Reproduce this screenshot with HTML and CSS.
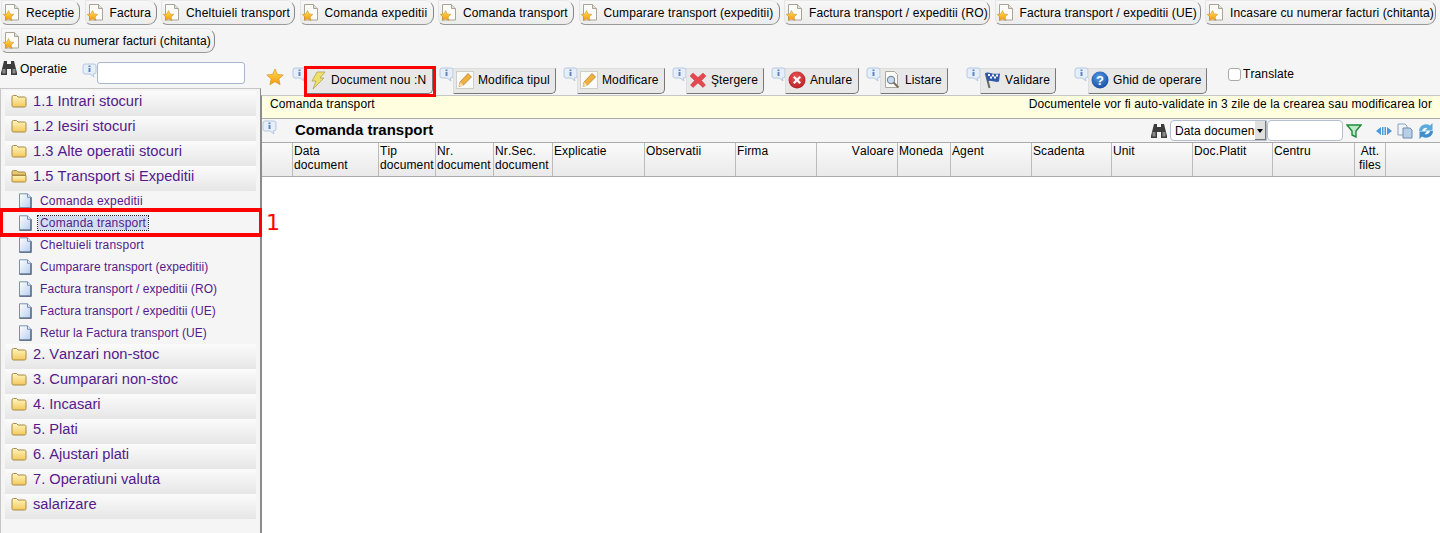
FILE: index.html
```html
<!DOCTYPE html>
<html lang="ro">
<head>
<meta charset="utf-8">
<title>Comanda transport</title>
<link rel="stylesheet" href="styles.css">
</head>
<body>
<svg class="defs" width="0" height="0" aria-hidden="true">
  <defs>
    <linearGradient id="fold" x1="0" y1="0" x2="0" y2="1"><stop offset="0" stop-color="#fff6c0"/><stop offset="1" stop-color="#f2c95c"/></linearGradient>
    <linearGradient id="page" x1="0" y1="0" x2="1" y2="1"><stop offset="0" stop-color="#ffffff"/><stop offset="1" stop-color="#b4cdf0"/></linearGradient>
    <radialGradient id="redg" cx=".45" cy=".35" r=".7"><stop offset="0" stop-color="#ee5a5a"/><stop offset="1" stop-color="#b01c22"/></radialGradient>
    <radialGradient id="blueg" cx=".45" cy=".35" r=".7"><stop offset="0" stop-color="#5a9be8"/><stop offset="1" stop-color="#12489e"/></radialGradient>
    <linearGradient id="stg" x1="0" y1="0" x2="0" y2="1"><stop offset="0" stop-color="#ffdf50"/><stop offset="1" stop-color="#f59a10"/></linearGradient>
    <symbol id="i-tab" viewBox="0 0 18 18">
      <path d="M2.500.5h9l4 4V16h-13z" fill="#fbfbf8" stroke="#a8a498"/>
      <path d="M11.500.5v4h4" fill="#e2e0d6" stroke="#a8a498"/>
      <path d="M5.500 6.500l1.600 3.400 3.700.5-2.700 2.500.7 3.600-3.300-1.800-3.300 1.800.7-3.600L.2 10.400l3.700-.5z" fill="url(#stg)" stroke="#c48a20" stroke-width=".5"/>
    </symbol>
    <symbol id="i-info" viewBox="0 0 15 15">
      <path d="M3 1h9a2 2 0 0 1 2 2v6a2 2 0 0 1-2 2h-1l1 3-4-3H3a2 2 0 0 1-2-2V3a2 2 0 0 1 2-2z" fill="#e6eef9" stroke="#b6c8e0"/>
      <rect x="6.500" y="2.500" width="2" height="1.600" fill="#5f86bd"/>
      <rect x="6.500" y="5" width="2" height="4" fill="#5f86bd"/>
    </symbol>
    <symbol id="i-folder" viewBox="0 0 16 14">
      <path d="M1 3a1.500 1.500 0 0 1 1.500-1.500h3L7 3h6.500A1.500 1.500 0 0 1 15 4.500v7a1.500 1.500 0 0 1-1.500 1.500h-11A1.500 1.500 0 0 1 1 11.500z" fill="url(#fold)" stroke="#a98a45"/>
    </symbol>
    <symbol id="i-open" viewBox="0 0 16 14">
      <path d="M1 3a1.500 1.500 0 0 1 1.500-1.500h3L7 3h6A1.500 1.500 0 0 1 14.500 4.500V6H1z" fill="#e8c870" stroke="#a98a45"/>
      <path d="M1 12.500V6.500h14v5A1.500 1.500 0 0 1 13.500 13h-11z" fill="url(#fold)" stroke="#a98a45"/>
    </symbol>
    <symbol id="i-page" viewBox="0 0 14 16">
      <path d="M1.500.8h8l3.500 3.500v10.900h-11.500z" fill="url(#page)" stroke="#7a8fb2"/>
      <path d="M13 4.300v10.900H1.500" fill="none" stroke="#55647c" stroke-width="1.300"/>
      <path d="M9.500.8v3.500h3.500" fill="#dfe9f8" stroke="#7a8fb2"/>
    </symbol>
    <symbol id="i-bino" viewBox="0 0 16 16">
      <path d="M3 1h3v3h4V1h3l1 4 2 8v2H10V9H6v6H0v-2l2-8z" fill="#3c3c3c"/>
      <rect x="1.500" y="9" width="3" height="4.500" fill="#8a8a8a"/>
      <rect x="11.500" y="9" width="3" height="4.500" fill="#8a8a8a"/>
    </symbol>
    <symbol id="i-pencil" viewBox="0 0 18 18">
      <rect x=".5" y=".5" width="17" height="17" fill="#fbfbf8" stroke="#cfcfc8"/>
      <path d="M3 15.500l1-4.500 8-8.500 3.500 3.500-8 8z" fill="#f0b040" stroke="#a87a30" stroke-width=".7"/>
      <path d="M3 15.500l1-4.500 3.500 3.500z" fill="#f5e1b0"/>
    </symbol>
  </defs>
</svg>

<nav class="tabs">
  <a class="tab tab-receptie"><svg class="ico18"><use href="#i-tab"/></svg>Receptie</a>
  <a class="tab tab-factura"><svg class="ico18"><use href="#i-tab"/></svg>Factura</a>
  <a class="tab tab-chelt wide"><svg class="ico18"><use href="#i-tab"/></svg>Cheltuieli transport</a>
  <a class="tab tab-exp wide"><svg class="ico18"><use href="#i-tab"/></svg>Comanda expeditii</a>
  <a class="tab tab-trans"><svg class="ico18"><use href="#i-tab"/></svg>Comanda transport</a>
  <a class="tab tab-cump"><svg class="ico18"><use href="#i-tab"/></svg>Cumparare transport (expeditii)</a>
  <a class="tab tab-ro"><svg class="ico18"><use href="#i-tab"/></svg>Factura transport / expeditii (RO)</a>
  <a class="tab tab-ue"><svg class="ico18"><use href="#i-tab"/></svg>Factura transport / expeditii (UE)</a>
  <a class="tab tab-inc"><svg class="ico18"><use href="#i-tab"/></svg>Incasare cu numerar facturi (chitanta)</a>
  <a class="tab tab-plata"><svg class="ico18"><use href="#i-tab"/></svg>Plata cu numerar facturi (chitanta)</a>
</nav>

<div class="main">
  <aside class="side">
    <div class="search">
      <svg class="ico-bino"><use href="#i-bino"/></svg>
      <span class="search-label">Operatie</span>
      <svg class="ico-info search-info"><use href="#i-info"/></svg>
      <input class="search-input" type="text">
    </div>
    <div class="tree">
      <div class="group"><svg class="ico-folder"><use href="#i-folder"/></svg>1.1 Intrari stocuri</div>
      <div class="group"><svg class="ico-folder"><use href="#i-folder"/></svg>1.2 Iesiri stocuri</div>
      <div class="group"><svg class="ico-folder"><use href="#i-folder"/></svg>1.3 Alte operatii stocuri</div>
      <div class="group"><svg class="ico-folder"><use href="#i-open"/></svg>1.5 Transport si Expeditii</div>
      <div class="leaf leaf-wide"><svg class="ico-page"><use href="#i-page"/></svg><span>Comanda expeditii</span></div>
      <div class="leaf leaf-on leaf-wide"><svg class="ico-page"><use href="#i-page"/></svg><span>Comanda transport</span></div>
      <div class="leaf leaf-wide"><svg class="ico-page"><use href="#i-page"/></svg><span>Cheltuieli transport</span></div>
      <div class="leaf"><svg class="ico-page"><use href="#i-page"/></svg><span>Cumparare transport (expeditii)</span></div>
      <div class="leaf"><svg class="ico-page"><use href="#i-page"/></svg><span>Factura transport / expeditii (RO)</span></div>
      <div class="leaf"><svg class="ico-page"><use href="#i-page"/></svg><span>Factura transport / expeditii (UE)</span></div>
      <div class="leaf leaf-last"><svg class="ico-page"><use href="#i-page"/></svg><span>Retur la Factura transport (UE)</span></div>
      <div class="group"><svg class="ico-folder"><use href="#i-folder"/></svg>2. Vanzari non-stoc</div>
      <div class="group"><svg class="ico-folder"><use href="#i-folder"/></svg>3. Cumparari non-stoc</div>
      <div class="group"><svg class="ico-folder"><use href="#i-folder"/></svg>4. Incasari</div>
      <div class="group"><svg class="ico-folder"><use href="#i-folder"/></svg>5. Plati</div>
      <div class="group"><svg class="ico-folder"><use href="#i-folder"/></svg>6. Ajustari plati</div>
      <div class="group"><svg class="ico-folder"><use href="#i-folder"/></svg>7. Operatiuni valuta</div>
      <div class="group"><svg class="ico-folder"><use href="#i-folder"/></svg>salarizare</div>
    </div>
  </aside>

  <section class="content">
    <div class="toolbar">
      <svg class="ico-star" viewBox="0 0 18 18"><path d="M9 1l2.400 5.400 5.800.6-4.400 3.900 1.300 5.800L9 13.700l-5.100 3 1.300-5.800L.8 7l5.800-.6z" fill="url(#stg)" stroke="#d89020" stroke-width=".7"/></svg>
      <svg class="ico-info tb-i1"><use href="#i-info"/></svg>
      <button class="btn btn-new"><svg class="ico18" viewBox="0 0 18 18"><path d="M8 1h8l-5 6h4L4 18l3-8H3z" fill="#efe06a" stroke="#a89a50" stroke-width=".7"/></svg>Document nou :N</button>
      <svg class="ico-info tb-i2"><use href="#i-info"/></svg>
      <button class="btn btn-tip"><svg class="ico18"><use href="#i-pencil"/></svg>Modifica tipul</button>
      <svg class="ico-info tb-i3"><use href="#i-info"/></svg>
      <button class="btn btn-mod"><svg class="ico18"><use href="#i-pencil"/></svg>Modificare</button>
      <svg class="ico-info tb-i3"><use href="#i-info"/></svg>
      <button class="btn btn-del"><svg class="ico18" viewBox="0 0 18 18"><path d="M4 2l5 4.500L14 2l3 3-4.500 4.500L16.500 14 14 16.500 9 12l-5 4.500L1.500 14l4-4.500L1 5z" fill="#e4484e" stroke="#c84048" stroke-width=".5"/></svg>Ştergere</button>
      <svg class="ico-info tb-i3"><use href="#i-info"/></svg>
      <button class="btn btn-anu"><svg class="ico18" viewBox="0 0 18 18"><circle cx="9" cy="9" r="8.500" fill="url(#redg)"/><path d="M5 6.500L6.500 5 9 7.500 11.500 5 13 6.500 10.500 9l2.500 2.500-1.500 1.500L9 10.500 6.500 13 5 11.500 7.500 9z" fill="#fff"/></svg>Anulare</button>
      <svg class="ico-info tb-i3"><use href="#i-info"/></svg>
      <button class="btn btn-lis"><svg class="ico18" viewBox="0 0 18 18"><path d="M2.500.5h9l3 3v13h-12z" fill="#fbfbf8" stroke="#a8a8a0"/><circle cx="8" cy="9" r="3.600" fill="#c8dcf0" stroke="#7d8a98" stroke-width="1.200"/><path d="M10.500 11.500l5 5" stroke="#7d7058" stroke-width="2"/></svg>Listare</button>
      <svg class="ico-info tb-i4"><use href="#i-info"/></svg>
      <button class="btn btn-val"><svg class="ico18" viewBox="0 0 18 18"><path d="M3 3l3.500 14" stroke="#6a6a62" stroke-width="2"/><path d="M2 2c4-2 7 2 15 .5l-1 8c-5 1.500-8-2-11.500 0z" fill="#3058a8"/><path d="M5 3h2v2H5zm4 .5h2v2H9zm4 0h2v2h-2zM7 5.500h2v2H7zm4 0h2v2h-2z" fill="#fff"/></svg>Validare</button>
      <svg class="ico-info tb-i4"><use href="#i-info"/></svg>
      <button class="btn btn-ghid"><svg class="ico18" viewBox="0 0 18 18"><circle cx="9" cy="9" r="8.500" fill="url(#blueg)"/><text x="9" y="13.500" class="qmark">?</text></svg>Ghid de operare</button>
      <label class="translate"><input type="checkbox" class="chk">Translate</label>
    </div>

    <div class="panel">
      <div class="notice">
        <span>Comanda transport</span>
        <span>Documentele vor fi auto-validate in 3 zile de la crearea sau modificarea lor</span>
      </div>
      <div class="titlebar">
        <svg class="ico-info title-info"><use href="#i-info"/></svg>
        <h1 class="title">Comanda transport</h1>
        <div class="filter">
          <svg class="ico-bino"><use href="#i-bino"/></svg>
          <span class="select"><span class="select-text">Data documen</span><span class="select-arrow"></span></span>
          <input class="filter-input" type="text">
          <svg class="ico-funnel" viewBox="0 0 16 14"><path d="M1 1h14L10 7v6l-4-2V7z" fill="#bfe8c8" stroke="#1f8a3c" stroke-width="1.400"/></svg>
          <svg class="ico-arrows" viewBox="0 0 16 12"><path d="M0 6l5-4v8zM16 6l-5-4v8z" fill="#4d9ad8"/><rect x="6" y="2" width="1.500" height="8" fill="#4d9ad8"/><rect x="8.500" y="2" width="1.500" height="8" fill="#4d9ad8"/></svg>
          <svg class="ico-copy" viewBox="0 0 16 16"><path d="M1 1h7l2 2v9H1z" fill="#f0f4fa" stroke="#8aa0bc"/><path d="M6 5h7l2 2v8H6z" fill="#b8cfe8" stroke="#6e8cae"/></svg>
          <svg class="ico-refresh" viewBox="0 0 16 16"><path d="M1 8a7 7 0 0 1 11-5.500L14.500 0v7.500H7L9.500 5A4 4 0 0 0 4 8z" fill="#5aaade"/><path d="M15 8a7 7 0 0 1-11 5.500L1.500 16V8.500H9L6.500 11A4 4 0 0 0 12 8z" fill="#3f8fce"/></svg>
        </div>
      </div>
      <div class="grid-head">
        <div class="th w30"></div>
        <div class="th w86">Data<br>document</div>
        <div class="th w57">Tip<br>document</div>
        <div class="th w58">Nr.<br>document</div>
        <div class="th w59">Nr.Sec.<br>document</div>
        <div class="th w92">Explicatie</div>
        <div class="th w91">Observatii</div>
        <div class="th w81">Firma</div>
        <div class="th w81 right">Valoare</div>
        <div class="th w53">Moneda</div>
        <div class="th w81">Agent</div>
        <div class="th w80">Scadenta</div>
        <div class="th w81">Unit</div>
        <div class="th w80">Doc.Platit</div>
        <div class="th w82">Centru</div>
        <div class="th w31 center">Att.<br>files</div>
        <div class="th rest"></div>
      </div>
      <div class="grid-body"></div>
    </div>
  </section>
</div>

<div class="mark mark-new"></div>
<div class="mark mark-leaf"></div>
<div class="mark-num">1</div>
</body>
</html>
```

FILE: styles.css
```css
* { box-sizing: border-box; }
html, body { margin: 0; height: 533px; overflow: hidden; }
body {
  background: #f5f5f5;
  color: #000;
  font: 12px/14px "Liberation Sans", Arial, sans-serif;
  font-kerning: none;
  letter-spacing: .12px;
  position: relative;
}
.defs { position: absolute; }
svg { display: block; flex: none; }
.wide { letter-spacing: .2px; }

/* tabs */
.tabs { display: flex; flex-wrap: wrap; padding: 0 0 0 1px; height: 56px; align-content: flex-start; row-gap: 3px; }
.tab {
  display: flex; align-items: center; height: 25px; padding: 0 3px 0 1px; margin-right: 4.500px;
  background: linear-gradient(#f7f7f7, #ececec);
  border: 1px solid #c4c4c4; border-left-color: #e4e4e4; border-top-color: #e8e8e8;
  border-right-color: #888; border-bottom-color: #999;
  border-radius: 0 9px 9px 6px;
  white-space: nowrap;
}
.tab .ico18 { margin-right: 5px; }
.ico18 { width: 18px; height: 18px; }
.tab-receptie { width: 79px; }
.tab-factura { width: 72px; }
.tab-chelt { width: 134px; }
.tab-exp { width: 134px; }
.tab-trans { width: 136px; }
.tab-cump { width: 201px; }
.tab-ro { width: 206px; }
.tab-ue { width: 206px; }
.tab-inc { width: 231px; margin-right: 0; }
.tab-plata { width: 214px; }

/* layout */
.main { display: flex; height: 477px; }
.side { width: 261px; flex: none; display: flex; flex-direction: column; }
.search { display: flex; align-items: flex-start; height: 32px; padding: 4px 0 0 1px; }
.search-label { margin: 2px 0 0 3px; width: 62px; }
.ico-bino { width: 16px; height: 16px; }
.ico-info { width: 15px; height: 15px; }
.search-info { margin-top: 3px; }
.search-input {
  width: 148px; height: 22px; margin: 2px 0 0 0; border: 1px solid #a9b6cc; border-radius: 3px; background: #fff; padding: 0;
}
.tree {
  flex: 1; border: 1px solid #c6c6c6; border-right: 1px solid #8c8c8c; border-bottom: 0; padding: 2px 4px 0;
  background: #f5f5f5;
}
.group {
  display: flex; align-items: center; height: 25px; padding: 0 0 5px 6px;
  background: linear-gradient(#fbfbfb, #e6e6e6);
  color: #551a8b; font-size: 14.670px; letter-spacing: 0; white-space: nowrap;
}
.ico-folder { width: 16px; height: 14px; margin-right: 6px; }
.leaf { display: flex; align-items: center; height: 22px; padding: 0 0 3px 13px; color: #551a8b; white-space: nowrap; letter-spacing: .07px; }
.leaf-wide { letter-spacing: .2px; }
.leaf-last { margin-bottom: -1px; }
.ico-page { width: 14px; height: 16px; margin-right: 8px; }
.leaf-on span { background: #d2deef; outline: 1px dotted #223; outline-offset: 0; padding: 0 2px; margin-left: -2px; }

/* toolbar */
.content { flex: 1; min-width: 0; display: flex; flex-direction: column; }
.toolbar { display: flex; align-items: flex-start; height: 40px; padding-top: 10px; position: relative; }
.ico-star { width: 18px; height: 18px; margin: 2px 0 0 5px; }
.toolbar .ico-info { margin-top: 1px; }
.tb-i1 { margin-left: 8px; }
.tb-i2 { margin-left: 6px; }
.tb-i3 { margin-left: 7px; }
.tb-i4 { margin-left: 18px; }
.btn {
  display: flex; align-items: center; height: 26px; padding: 0 0 2px 2px; margin-top: 2px; margin-left: -1px;
  font: 12px/14px "Liberation Sans", Arial, sans-serif; font-kerning: none; letter-spacing: .12px; color: #000;
  background: #e8e8e8; border: 1px solid #ddd; border-right-color: #777; border-bottom-color: #777;
  border-radius: 0 0 5px 0; white-space: nowrap;
}
.btn .ico18 { margin-right: 4px; }
.btn-new { width: 127px; }
.btn-tip { width: 103px; }
.btn-mod { width: 88px; }
.btn-del { width: 78px; }
.btn-anu { width: 74px; }
.btn-lis { width: 68px; }
.btn-val { width: 76px; }
.btn-ghid { width: 119px; }
.qmark { font: bold 13px "Liberation Sans", sans-serif; fill: #fff; text-anchor: middle; }
.translate { display: flex; align-items: center; margin: 1px 0 0 21px; }
.chk { width: 13px; height: 13px; margin: 0 2px 0 0; appearance: none; background: #fff; border: 1px solid #aaa; border-radius: 3px; }

/* panel */
.panel { flex: 1; display: flex; flex-direction: column; border-left: 1px solid #8c8c8c; min-height: 0; margin-top: -1px; border-top: 1px solid #c6c6c6; }
.notice {
  display: flex; justify-content: space-between; height: 23px; padding: 1px 8px 0; background: #ffffe0;
  border-bottom: 1px solid #aaa; white-space: nowrap;
}
.titlebar { display: flex; align-items: center; height: 24px; border-bottom: 1px solid #aaa; position: relative; }
.title-info { position: absolute; left: 0; top: 1px; }
.title { margin: 0 0 2px 33px; font-size: 15px; font-weight: bold; line-height: 18px; letter-spacing: 0; flex: 1; }
.filter { display: flex; align-items: center; padding-right: 6px; }
.select {
  display: flex; width: 97px; height: 21px; margin-left: 3px; background: #fff; border: 1px solid #b4bfd0; border-radius: 4px 0 0 4px; align-items: center; padding-left: 4px; overflow: hidden; position: relative;
}
.select-text { flex: 1; white-space: nowrap; overflow: hidden; }
.select-arrow { width: 11px; height: 19px; background: #e0e0e0; border-right: 1px solid #777; border-bottom: 1px solid #777; flex: none; position: relative; }
.select-arrow::after { content: ""; position: absolute; left: 2px; top: 8px; border: 3px solid transparent; border-top: 4px solid #000; border-bottom: 0; }
.filter-input { width: 76px; height: 21px; border: 1px solid #b4bfd0; border-radius: 4px; padding: 0; background: #fff; }
.ico-funnel { width: 16px; height: 14px; margin: 0 14px 0 3px; }
.ico-arrows { width: 16px; height: 12px; margin-right: 5px; }
.ico-copy { width: 16px; height: 16px; margin-right: 5px; }
.ico-refresh { width: 16px; height: 16px; }

.grid-head { display: flex; height: 34px; background: linear-gradient(#fafafa, #eaeaea); border-bottom: 1px solid #aaa; flex: none; }
.th { height: 33px; padding: 1px 0 0 1px; border-right: 1px solid #bbb; line-height: 14px; white-space: nowrap; overflow: hidden; flex: none; }
.right { text-align: right; padding-right: 3px; }
.center { text-align: center; padding-left: 0; }
.w30 { width: 31px; }
.w86 { width: 86px; }
.w57 { width: 57px; }
.w58 { width: 58px; }
.w59 { width: 59px; }
.w92 { width: 92px; }
.w91 { width: 91px; }
.w81 { width: 81px; }
.w53 { width: 53px; }
.w80 { width: 80px; }
.w82 { width: 82px; }
.w31 { width: 31px; }
.rest { flex: 1; border-right: 0; }
.grid-body { flex: 1; background: #fff; }

/* annotations */
.mark { position: absolute; border: 3px solid #f00; }
.mark-new { left: 304px; top: 66px; width: 132px; height: 31px; }
.mark-leaf { left: 0; top: 208px; width: 262px; height: 29px; border-width: 4px 3px; }
.mark-num { position: absolute; left: 266px; top: 209px; color: #f00; font: 22px/28px "DejaVu Sans", sans-serif; }
```
